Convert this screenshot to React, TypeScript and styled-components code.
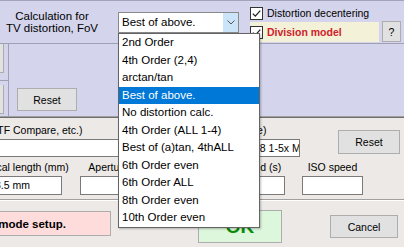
import styled, { createGlobalStyle } from 'styled-components';

const GlobalStyle = createGlobalStyle`
  html, body {
    margin: 0;
    padding: 0;
    background: #ece9e6;
  }
  body {
    font-family: "Liberation Sans", Arial, sans-serif;
  }
`;

const Dialog = styled.div`
  position: relative;
  width: 404px;
  height: 247px;
  overflow: hidden;
  background: #ece9e6;
  color: #000;
  font-family: "Liberation Sans", Arial, sans-serif;
  font-size: 10.5px;
`;

const TopPanel = styled.div`
  background: #d4d4ec;
  border-top: 1px solid #a4a4b8;
`;

const Header = styled.div`
  display: flex;
  height: 42px;
  border-bottom: 1px solid #a0a0b4;
`;

const Caption = styled.div`
  width: 104px;
  margin-right: 14px;
  align-self: center;
  text-align: center;
  font-size: 11.5px;
  line-height: 12.5px;
  white-space: nowrap;
`;

const SelectWrap = styled.div`
  position: relative;
  margin-top: 11px;
  width: 121px;
  height: 21px;
  z-index: 2;
`;

const SelectBox = styled.div`
  display: flex;
  box-sizing: border-box;
  height: 100%;
  border: 1px solid #8a8a8a;
  background: #fff;
`;

const SelectText = styled.div`
  flex: 1;
  padding-left: 3px;
  font-size: 11.5px;
  line-height: 19px;
  white-space: nowrap;
`;

const SelectArrow = styled.div`
  width: 15px;
  display: flex;
  align-items: center;
  justify-content: center;
  background: #cce4f7;
`;

const List = styled.div`
  position: absolute;
  top: 100%;
  left: 0;
  width: 142px;
  box-sizing: border-box;
  border: 1px solid #646464;
  background: #fff;
  box-shadow: 1px 1px 2px rgba(0, 0, 0, 0.25);
`;

const Item = styled.div<{ $active?: boolean }>`
  height: 17.5px;
  line-height: 17.5px;
  padding-left: 3px;
  font-size: 11.5px;
  white-space: nowrap;
  background: ${({ $active }) => ($active ? '#0078d7' : '#fff')};
  color: ${({ $active }) => ($active ? '#fff' : '#000')};
`;

const Options = styled.div`
  display: flex;
  flex-direction: column;
  margin-left: 11px;
  width: 151px;
  padding-top: 4px;
`;

const CheckRow = styled.div`
  display: flex;
  align-items: center;
  gap: 4px;
  height: 16px;
  white-space: nowrap;
`;

const Box = styled.span`
  display: inline-flex;
  align-items: center;
  justify-content: center;
  box-sizing: border-box;
  width: 13px;
  height: 13px;
  flex: none;
  border: 1px solid #333;
  background: #fff;
`;

const ModelRow = styled.div`
  display: flex;
  gap: 3px;
  height: 21px;
`;

const Band = styled.div`
  flex: 1;
  display: flex;
  align-items: center;
  gap: 4px;
  margin-top: 1px;
  background: #f3f1d8;
  white-space: nowrap;
`;

const RedLabel = styled.span`
  color: #d0202a;
  font-weight: bold;
`;

const Button = styled.div<{ $w: number; $h: number }>`
  display: flex;
  align-items: center;
  justify-content: center;
  box-sizing: border-box;
  width: ${({ $w }) => $w}px;
  height: ${({ $h }) => $h}px;
  flex: none;
  border: 1px solid #adadad;
  background: #e1e1e1;
  white-space: nowrap;
`;

const Body = styled.div`
  display: flex;
  height: 72px;
`;

const Strip = styled.div`
  display: flex;
  flex-direction: column;
  box-sizing: border-box;
  width: 9px;
  border-right: 1px solid #a0a0b4;
`;

const StripKey = styled.div<{ $h: number }>`
  width: 3px;
  height: ${({ $h }) => $h}px;
  background: #e1e1e1;
  border-right: 1px solid #adadad;
  border-bottom: 1px solid #adadad;
`;

const StripLine = styled.div`
  height: 1px;
  margin: 7px 0 4px;
  background: #a0a0b4;
`;

const Slot = styled.div<{ $m: string; $align?: string }>`
  align-self: ${({ $align }) => $align ?? 'flex-start'};
  margin: ${({ $m }) => $m};
  flex: none;
`;

const Separator = styled.div`
  height: 1px;
  border-top: 1px solid #a0a0a0;
  background: #6e6e6e;
`;

const Lower = styled.div`
  padding-top: 6px;
`;

const InfoRow = styled.div`
  display: flex;
  align-items: flex-start;
`;

const Field = styled.div<{ $w: number; $ml: number; $center?: boolean }>`
  display: flex;
  flex-direction: column;
  align-items: ${({ $center }) => ($center ? 'center' : 'flex-start')};
  width: ${({ $w }) => $w}px;
  margin-left: ${({ $ml }) => $ml}px;
  flex: none;
`;

const Label = styled.div<{ $indent?: number }>`
  height: 13px;
  line-height: 13px;
  padding-left: ${({ $indent }) => $indent ?? 0}px;
  white-space: nowrap;
`;

const Input = styled.div<{ $h: number; $indent?: number }>`
  box-sizing: border-box;
  width: 100%;
  height: ${({ $h }) => $h}px;
  margin-top: 2px;
  padding-left: ${({ $indent }) => $indent ?? 3}px;
  border: 1px solid #7a7a7a;
  background: #fff;
  line-height: ${({ $h }) => $h - 2}px;
  white-space: nowrap;
  overflow: hidden;
`;

const CameraRow = styled.div`
  display: flex;
  margin-top: 4px;
`;

const Divider = styled.div`
  margin-top: 4px;
  height: 0;
  border-top: 1px solid #a0a0a0;
  border-bottom: 1px solid #fff;
`;

const Actions = styled.div`
  display: flex;
  align-items: flex-start;
  padding-top: 9px;
`;

const SetupButton = styled.div`
  display: flex;
  align-items: center;
  box-sizing: border-box;
  width: 172px;
  height: 25px;
  margin: 1px 0 0 -61px;
  border: 1px solid #adadad;
  background: #ffdcdc;
  font-size: 11.5px;
  font-weight: bold;
  white-space: nowrap;
`;

const OkButton = styled.div`
  display: flex;
  align-items: center;
  justify-content: center;
  box-sizing: border-box;
  width: 84px;
  height: 33px;
  margin-left: 87px;
  border: 1px solid #adadad;
  background: #dcf7dc;
  color: #0c8c0c;
  font-size: 19px;
  font-weight: bold;
`;

const Check = () => (
  <svg width="11" height="11" viewBox="0 0 11 11">
    <path d="M1.8 5.6 L4.3 8.1 L9.3 2.6" fill="none" stroke="#222" strokeWidth="1.3" />
  </svg>
);

const Chevron = () => (
  <svg width="8" height="5" viewBox="0 0 8 5">
    <path d="M0.5 0.5 L4 4 L7.5 0.5" fill="none" stroke="#555" strokeWidth="1" />
  </svg>
);

const orders = [
  '2nd Order',
  '4th Order (2,4)',
  'arctan/tan',
  'Best of above.',
  'No distortion calc.',
  '4th Order (ALL 1-4)',
  'Best of (a)tan, 4thALL',
  '6th Order even',
  '6th Order ALL',
  '8th Order even',
  '10th Order even',
];

const camera = [
  { label: 'Focal length (mm)', value: '3.5 mm', w: 71, ml: -9 },
  { label: 'Aperture', value: '', w: 57, ml: 18 },
  { label: 'Shutter speed (s)', value: '', w: 88, ml: 60 },
  { label: 'ISO speed', value: '', w: 61, ml: 17 },
];

export default function App() {
  return (
    <Dialog>
      <GlobalStyle />
      <TopPanel>
        <Header>
          <Caption>
            Calculation for
            <br />
            TV distortion, FoV
          </Caption>
          <SelectWrap>
            <SelectBox>
              <SelectText>Best of above.</SelectText>
              <SelectArrow>
                <Chevron />
              </SelectArrow>
            </SelectBox>
            <List>
              {orders.map((o, i) => (
                <Item key={o} $active={i === 3}>
                  {o}
                </Item>
              ))}
            </List>
          </SelectWrap>
          <Options>
            <CheckRow>
              <Box>
                <Check />
              </Box>
              Distortion decentering
            </CheckRow>
            <ModelRow>
              <Band>
                <Box>
                  <Check />
                </Box>
                <RedLabel>Division model</RedLabel>
              </Band>
              <Button $w={19} $h={21}>?</Button>
            </ModelRow>
          </Options>
        </Header>
        <Body>
          <Strip>
            <StripKey $h={28} />
            <StripLine />
            <StripKey $h={28} />
          </Strip>
          <Slot $m="0 0 5px 8px" $align="flex-end">
            <Button $w={60} $h={23}>Reset</Button>
          </Slot>
        </Body>
      </TopPanel>
      <Separator />
      <Lower>
        <InfoRow>
          <Field $w={190} $ml={-20}>
            <Label $indent={5}>(MTF Compare, etc.)</Label>
            <Input $h={18} />
          </Field>
          <Field $w={124} $ml={6}>
            <Label $indent={4}>Lens (in file name)</Label>
            <Input $h={18} $indent={7}>MP-E 65mm f/2.8 1-5x Macro</Input>
          </Field>
          <Slot $m="6px 0 0 38px">
            <Button $w={62} $h={24}>Reset</Button>
          </Slot>
        </InfoRow>
        <CameraRow>
          {camera.map((c) => (
            <Field key={c.label} $w={c.w} $ml={c.ml} $center>
              <Label>{c.label}</Label>
              <Input $h={19}>{c.value}</Input>
            </Field>
          ))}
        </CameraRow>
        <Divider />
        <Actions>
          <SetupButton>Advanced mode setup.</SetupButton>
          <OkButton>OK</OkButton>
          <Slot $m="5px 0 0 48px">
            <Button $w={68} $h={23}>Cancel</Button>
          </Slot>
        </Actions>
      </Lower>
    </Dialog>
  );
}
